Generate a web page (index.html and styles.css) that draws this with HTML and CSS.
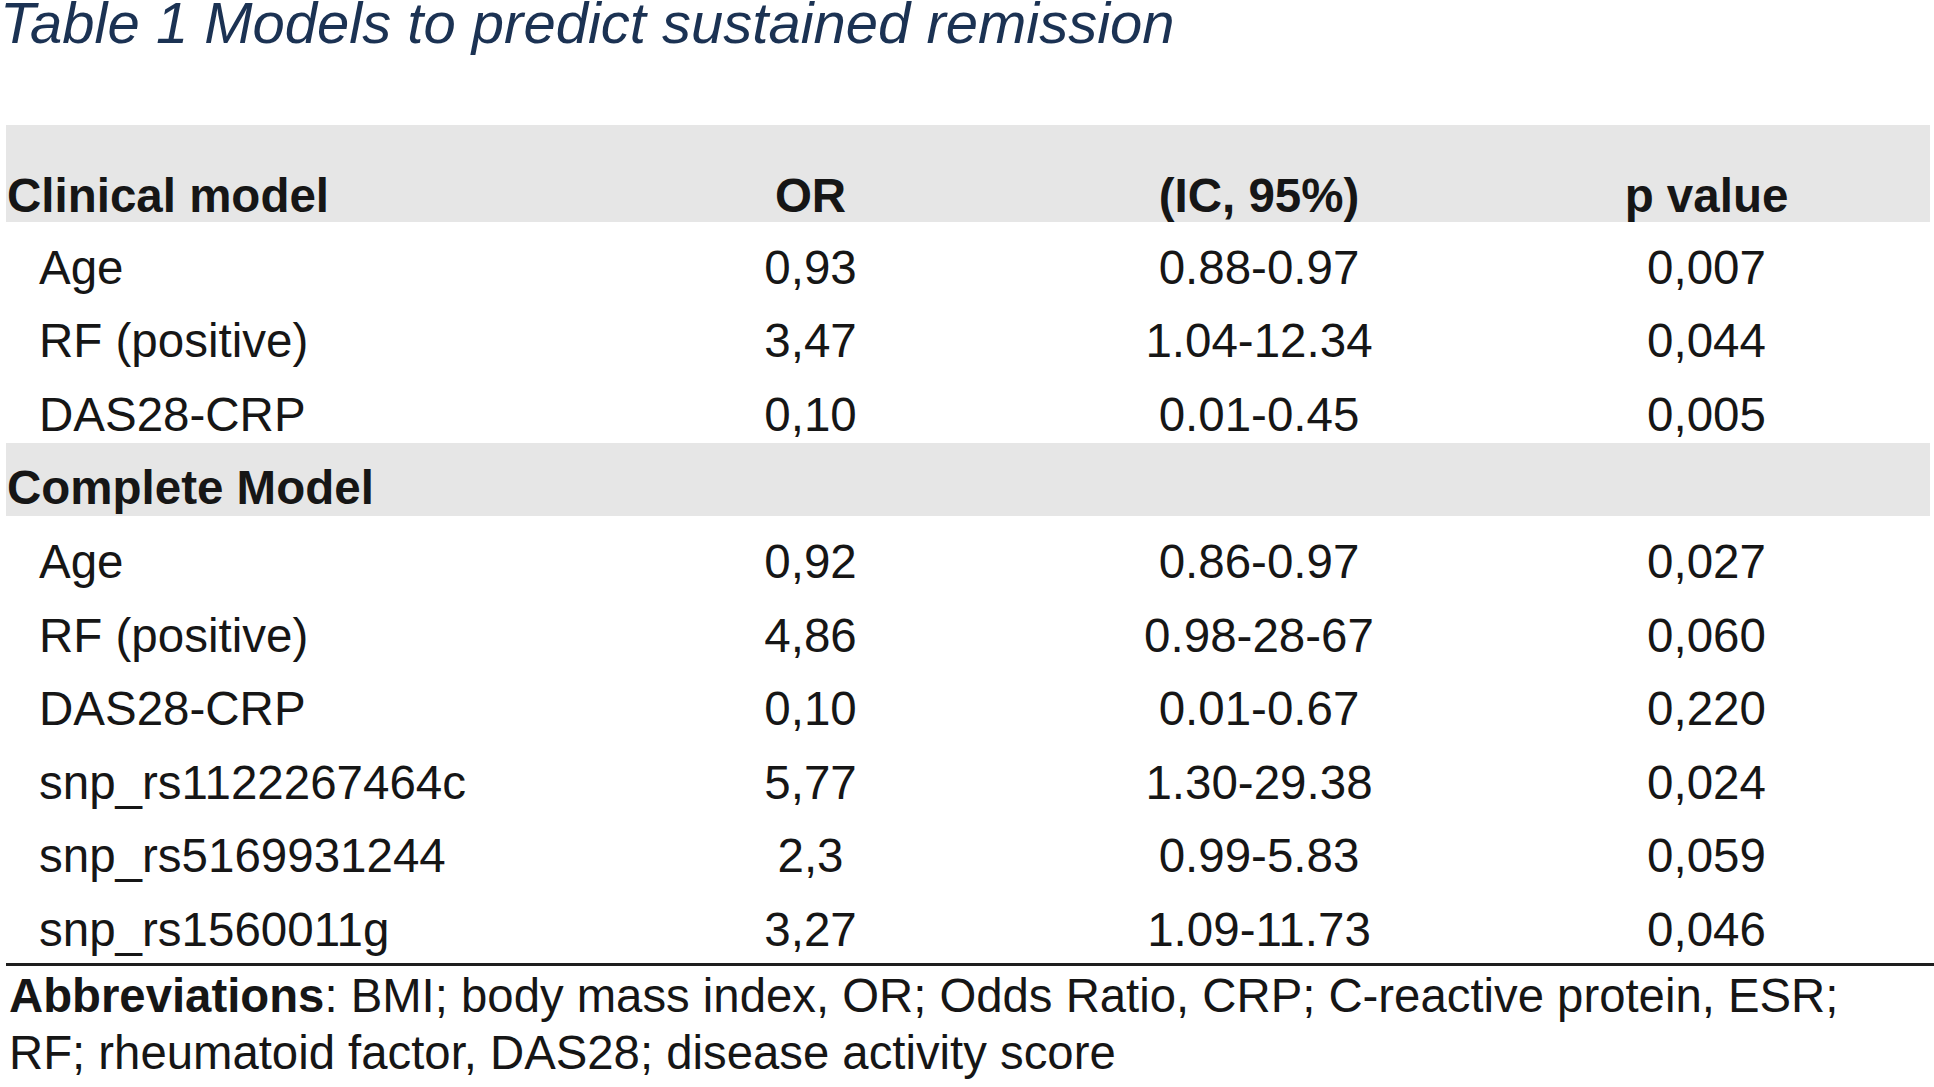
FILE: index.html
```html
<!DOCTYPE html>
<html lang="en">
<head>
<meta charset="utf-8">
<title>Table 1 Models to predict sustained remission</title>
<link rel="stylesheet" href="styles.css">
</head>
<body>
<h1 class="title">Table 1 Models to predict sustained remission</h1>
<table class="models">
  <colgroup>
    <col class="c-name"><col class="c-or"><col class="c-ic"><col class="c-p">
  </colgroup>
  <thead>
    <tr class="band head">
      <th class="name">Clinical model</th>
      <th>OR</th>
      <th>(IC, 95%)</th>
      <th>p value</th>
    </tr>
  </thead>
  <tbody>
    <tr><td class="name sub">Age</td><td>0,93</td><td>0.88-0.97</td><td>0,007</td></tr>
    <tr><td class="name sub">RF (positive)</td><td>3,47</td><td>1.04-12.34</td><td>0,044</td></tr>
    <tr><td class="name sub">DAS28-CRP</td><td>0,10</td><td>0.01-0.45</td><td>0,005</td></tr>
    <tr class="band"><th class="name">Complete Model</th><td></td><td></td><td></td></tr>
    <tr><td class="name sub">Age</td><td>0,92</td><td>0.86-0.97</td><td>0,027</td></tr>
    <tr><td class="name sub">RF (positive)</td><td>4,86</td><td>0.98-28-67</td><td>0,060</td></tr>
    <tr><td class="name sub">DAS28-CRP</td><td>0,10</td><td>0.01-0.67</td><td>0,220</td></tr>
    <tr><td class="name sub">snp_rs1122267464c</td><td>5,77</td><td>1.30-29.38</td><td>0,024</td></tr>
    <tr><td class="name sub">snp_rs5169931244</td><td>2,3</td><td>0.99-5.83</td><td>0,059</td></tr>
    <tr><td class="name sub">snp_rs1560011g</td><td>3,27</td><td>1.09-11.73</td><td>0,046</td></tr>
  </tbody>
</table>
<p class="notes"><strong>Abbreviations</strong>: BMI; body mass index, OR; Odds Ratio, CRP; C-reactive protein, ESR;<br>RF; rheumatoid factor, DAS28; disease activity score</p>
</body>
</html>
```

FILE: styles.css
```css
html, body {
  margin: 0;
  padding: 0;
  background: #ffffff;
}

body {
  font-family: "Liberation Sans", Arial, sans-serif;
  color: #161616;
}

.title {
  margin: 0 0 79px 0;
  font-size: 58px;
  font-style: italic;
  font-weight: normal;
  line-height: 46px;
  color: #1b3253;
  white-space: nowrap;
}

.models {
  margin-left: 6px;
  width: 1924px;
  border-collapse: collapse;
  border-spacing: 0;
  table-layout: fixed;
  font-size: 47.5px;
  line-height: 52px;
}

.c-name { width: 580px; }
.c-or { width: 449px; }
.c-ic { width: 448px; }
.c-p { width: 447px; }

.models th,
.models td {
  padding: 0 0 2px 0;
  text-align: center;
  vertical-align: bottom;
  white-space: nowrap;
}

.models th { font-weight: bold; }

.models .name { text-align: left; padding-left: 1px; }
.models .sub { padding-left: 33px; }

.models tr { height: 73.6px; }
.models tr.head { height: 97px; }
.models tr.head th { padding-bottom: 0; }

.band { background: #e6e6e6; }

.notes {
  margin: 5px 0 0 6px;
  padding: 1px 0 0 3px;
  border-top: 3px solid #1e1e1e;
  font-size: 47.3px;
  line-height: 57px;
  white-space: nowrap;
}

.notes strong { font-weight: bold; }
```
